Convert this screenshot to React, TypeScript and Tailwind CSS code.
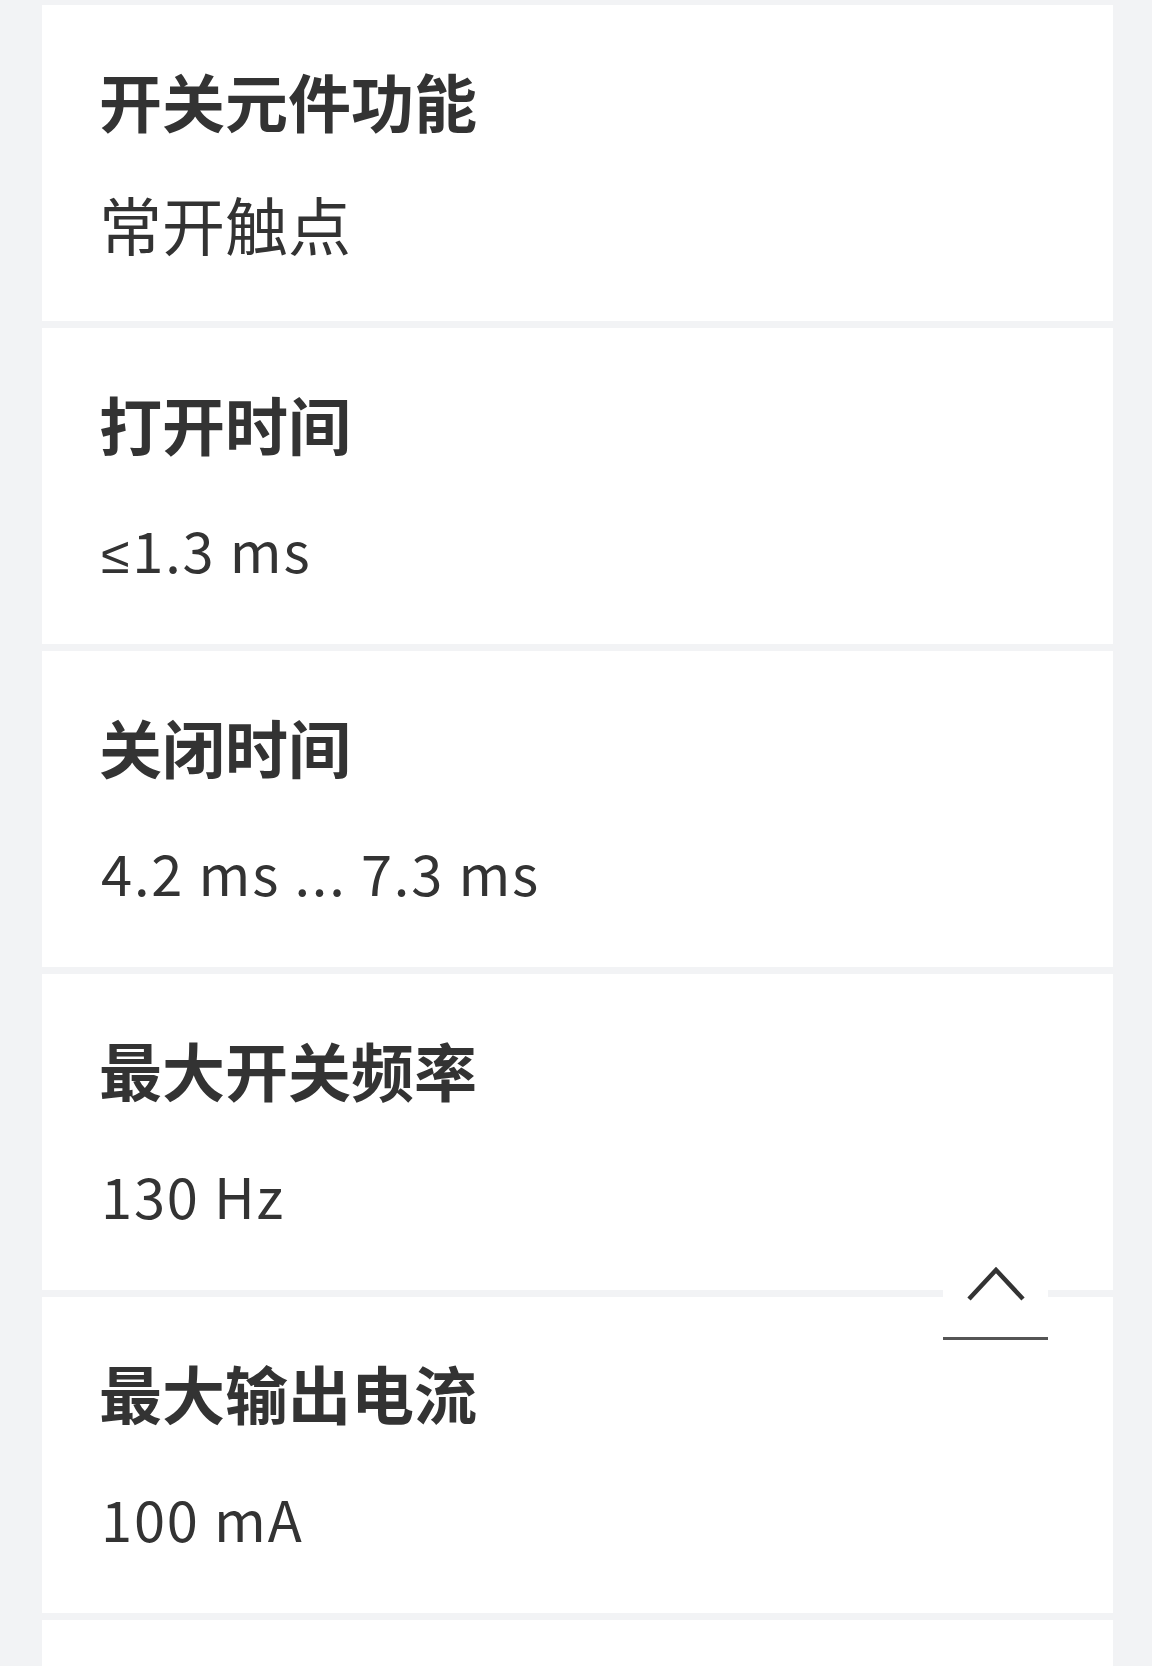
type Spec = { label: string; value: string; latin?: boolean };

const specs: Spec[] = [
  { label: '开关元件功能', value: '常开触点' },
  { label: '打开时间', value: '1.3 ms', latin: true },
  { label: '关闭时间', value: '4.2 ms ... 7.3 ms', latin: true },
  { label: '最大开关频率', value: '130 Hz', latin: true },
  { label: '最大输出电流', value: '100 mA', latin: true },
  { label: '', value: '' },
];

function SpecCard({ label, value, latin, index }: Spec & { index: number }) {
  return (
    <div className="h-[316px] w-[1071px] shrink-0 bg-white pl-[57px] pt-[48px] text-[#333333]">
      {label && <div className="text-[63px] font-bold leading-[93px]">{label}</div>}
      {value && (
        <div className="mt-[30px] text-[63px] font-normal leading-[93px]">
          {latin ? (
            <span className="ml-[2px] text-[56px] tracking-[1.8px]">
              {index === 1 && (
                <span className="mr-[1px] text-[52px] font-light" style={{ fontFamily: '"Noto Sans", "DejaVu Sans", sans-serif' }}>
                  ≤
                </span>
              )}
              {value}
            </span>
          ) : (
            value
          )}
        </div>
      )}
    </div>
  );
}

export default function App() {
  return (
    <div
      className="relative h-[1666px] overflow-hidden bg-[#f2f3f5] pl-[42px] pt-[5px]"
      style={{ fontFamily: '"Noto Sans CJK SC", "Noto Sans", sans-serif' }}
    >
      <div className="flex flex-col gap-[7px]">
        {specs.map((s, i) => (
          <SpecCard key={i} index={i} {...s} />
        ))}
      </div>

      {/* Back to top */}
      <button className="absolute left-[943px] top-[1245px] flex h-[95px] w-[105px] items-start justify-center border-b-[3px] border-[#555555] bg-white pt-[22px]">
        <svg width="60" height="36" viewBox="0 0 60 36" fill="none">
          <path d="M3 32 L30 3 L57 32" stroke="#333333" strokeWidth="4.5" />
        </svg>
      </button>
    </div>
  );
}
